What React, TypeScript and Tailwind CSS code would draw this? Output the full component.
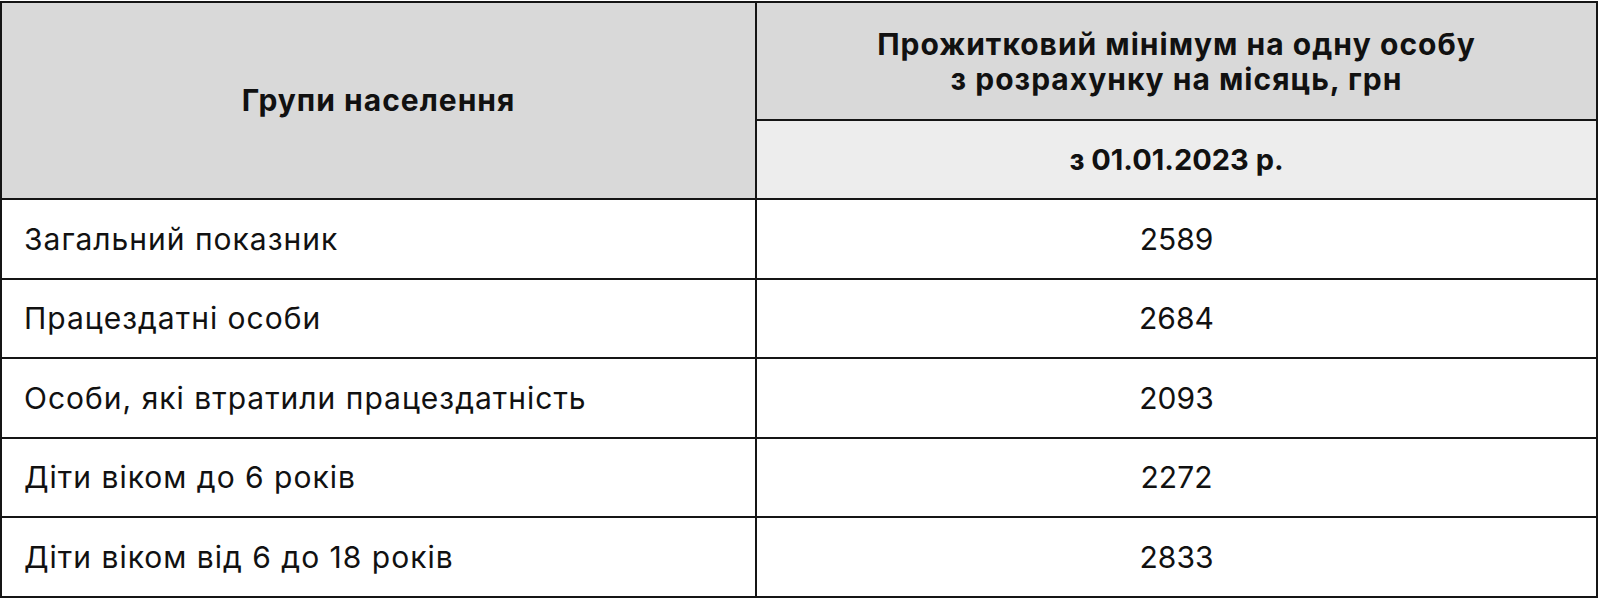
import React from "react";

const rows: [string, string][] = [
  ["Загальний показник", "2589"],
  ["Працездатні особи", "2684"],
  ["Особи, які втратили працездатність", "2093"],
  ["Діти віком до 6 років", "2272"],
  ["Діти віком від 6 до 18 років", "2833"],
];

export default function App() {
  return (
    <div className="w-[1600px] h-[601px] bg-white pt-[1px] text-[#111111] font-['Inter',sans-serif]">
      <div className="w-[1598px] bg-[#151515] p-[2px] grid grid-cols-[753px_839px] grid-rows-[116px_77px_78px_77px_78px_77px_78px] gap-[2px]">
        <div className="row-span-2 bg-[#d9d9d9] flex items-center justify-center text-[30px] font-bold tracking-[1px]">
          Групи населення
        </div>
        <div className="bg-[#d9d9d9] flex flex-col items-center justify-center pt-[2px] text-[30px] font-bold tracking-[1px] leading-[35px] text-center">
          <span>Прожитковий мінімум на одну особу</span>
          <span>з розрахунку на місяць, грн</span>
        </div>
        <div className="bg-[#ededed] flex items-center justify-center text-[29px] font-bold">
          з 01.01.2023 р.
        </div>
        {rows.map(([label, value]) => (
          <React.Fragment key={label}>
            <div className="bg-white flex items-center pl-[22px] text-[30px] tracking-[1px]">{label}</div>
            <div className="bg-white flex items-center justify-center text-[30px]">{value}</div>
          </React.Fragment>
        ))}
      </div>
    </div>
  );
}
